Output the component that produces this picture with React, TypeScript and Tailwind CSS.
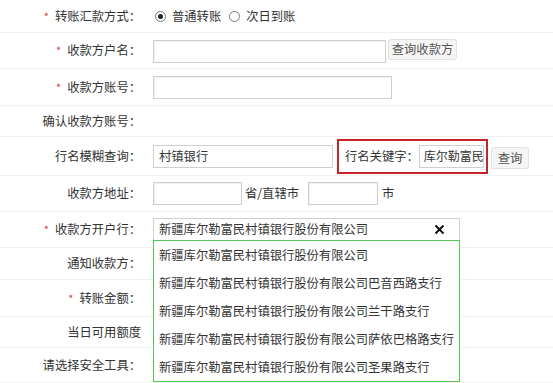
import React from "react";

const Star = () => <span className="text-[#e0403f] mr-[6px] text-[11px]">*</span>;

function Label({ text, star, w }: { text: string; star?: boolean; w?: string }) {
  return (
    <div className={`w-[141px] shrink-0 flex justify-end items-center pr-[0px] ${w ?? ""}`}>
      {star && <Star />}
      <span>{text}</span>
    </div>
  );
}

const Input = ({ cls }: { cls: string }) => (
  <div className={`border border-[#cfcfcf] bg-white shadow-[inset_1px_1px_1px_rgba(0,0,0,0.06)] ${cls}`} />
);

const Btn = ({ text, cls }: { text: string; cls?: string }) => (
  <div className={`border border-[#e2e2e2] bg-[#f5f5f5] rounded-[3px] text-[#555] flex items-center justify-center ${cls ?? ""}`}>
    {text}
  </div>
);

const Radio = ({ on }: { on?: boolean }) => (
  <span className="w-[11px] h-[11px] rounded-full border border-[#777] bg-white flex items-center justify-center">
    {on && <span className="w-[5px] h-[5px] rounded-full bg-[#222]" />}
  </span>
);

export default function App() {
  const options = [
    "新疆库尔勒富民村镇银行股份有限公司",
    "新疆库尔勒富民村镇银行股份有限公司巴音西路支行",
    "新疆库尔勒富民村镇银行股份有限公司兰干路支行",
    "新疆库尔勒富民村镇银行股份有限公司萨依巴格路支行",
    "新疆库尔勒富民村镇银行股份有限公司圣果路支行",
  ];
  const row = "flex items-center border-b border-[#f1f1f1]";
  return (
    <div
      className="relative w-[553px] h-[383px] bg-white overflow-hidden text-[12.3px] text-[#333]"
      style={{ fontFamily: '"Microsoft YaHei","Noto Sans CJK SC",sans-serif' }}
    >
      <div className={`${row} h-[33px]`}>
        <Label text="转账汇款方式：" star />
        <div className="ml-[14px] flex items-center">
          <Radio on />
          <span className="ml-[6px]">普通转账</span>
          <span className="ml-[8px]"><Radio /></span>
          <span className="ml-[6px]">次日到账</span>
        </div>
      </div>
      <div className={`${row} h-[36px]`}>
        <Label text="收款方户名：" star />
        <Input cls="ml-[12px] w-[233px] h-[23px] mt-[1px]" />
        <Btn text="查询收款方" cls="ml-[2px] w-[69px] h-[21px] -mt-[3px]" />
      </div>
      <div className={`${row} h-[37px]`}>
        <Label text="收款方账号：" star />
        <Input cls="ml-[12px] w-[239px] h-[23px]" />
      </div>
      <div className={`${row} h-[31px]`}>
        <Label text="确认收款方账号：" />
      </div>
      <div className={`${row} h-[39px]`}>
        <Label text="行名模糊查询：" />
        <div className="ml-[12px] w-[180px] h-[23px] border border-[#cfcfcf] flex items-center pl-[5px]">村镇银行</div>
        <div className="ml-[4px] w-[151px] h-[35px] border-2 border-[#c3252a] flex items-center pl-[6px]">
          <span>行名关键字：</span>
          <div className="ml-[0px] w-[65px] h-[23px] border border-[#cfcfcf] flex items-center pl-[4px] text-[12px] whitespace-nowrap overflow-hidden">库尔勒富民</div>
        </div>
        <Btn text="查询" cls="ml-[3px] w-[38px] h-[22px] mt-[4px]" />
      </div>
      <div className={`${row} h-[36px]`}>
        <Label text="收款方地址：" />
        <Input cls="ml-[12px] w-[89px] h-[23px]" />
        <span className="ml-[3px]">省/直辖市</span>
        <Input cls="ml-[9px] w-[70px] h-[23px]" />
        <span className="ml-[4px]">市</span>
      </div>
      <div className={`${row} h-[36px]`}>
        <Label text="收款方开户行：" star />
        <div className="ml-[12px] w-[307px] h-[23px] border border-[#cfcfcf] flex items-center pl-[5px] justify-between pr-[14px]">
          <span>新疆库尔勒富民村镇银行股份有限公司</span>
          <svg width="11" height="11" viewBox="0 0 11 11">
            <path d="M1.5 1.5 L9.5 9.5 M9.5 1.5 L1.5 9.5" stroke="#111" strokeWidth="2" />
          </svg>
        </div>
      </div>
      <div className={`${row} h-[32px]`}>
        <Label text="通知收款方：" />
      </div>
      <div className={`${row} h-[37px]`}>
        <Label text="转账金额：" star />
      </div>
      <div className={`${row} h-[31px]`}>
        <Label text="当日可用额度" />
      </div>
      <div className={`${row} h-[35px]`}>
        <Label text="请选择安全工具：" />
      </div>

      <div className="absolute left-[153px] top-[240px] w-[307px] h-[142px] border border-[#55c755] bg-white flex flex-col">
        {options.map((o) => (
          <div key={o} className="h-[28px] flex items-center pl-[5px] whitespace-nowrap">{o}</div>
        ))}
      </div>
    </div>
  );
}
